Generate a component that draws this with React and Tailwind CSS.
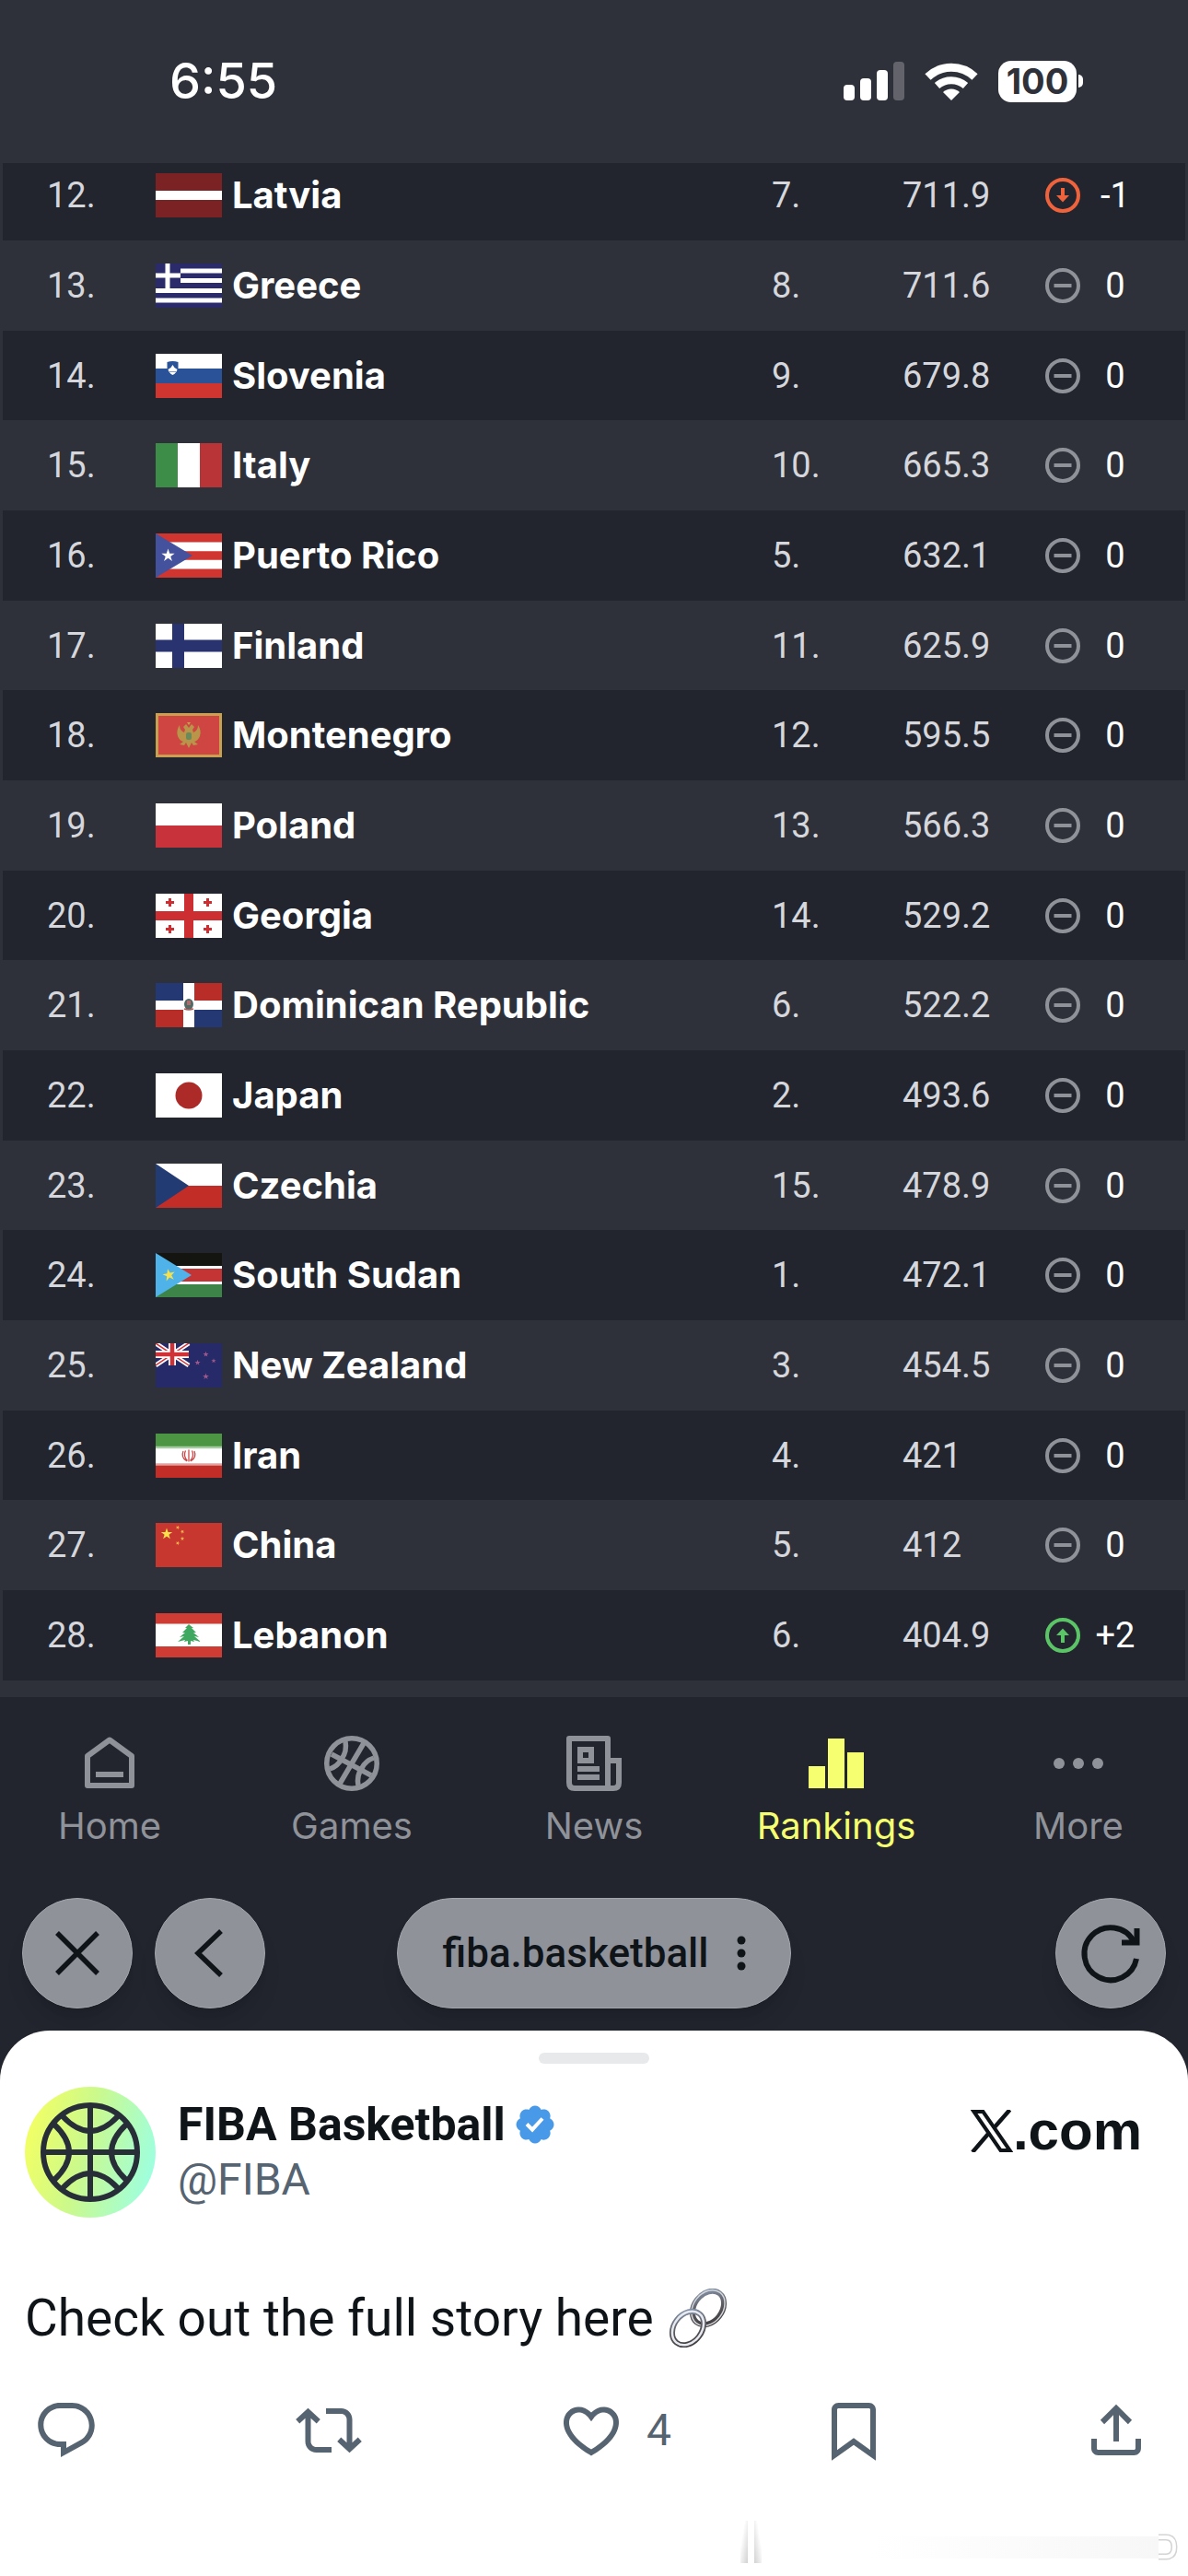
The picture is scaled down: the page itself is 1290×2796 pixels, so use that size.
import React, { useState } from "react";

const STAR = "0,-10 2.3,-3.1 9.5,-3.1 3.7,1.2 5.9,8.1 0,3.8 -5.9,8.1 -3.7,1.2 -9.5,-3.1 -2.3,-3.1";

const Star = ({ x, y, r, fill, rotate = 0 }) => (
  <polygon points={STAR} fill={fill} transform={`translate(${x} ${y}) rotate(${rotate}) scale(${r / 10})`} />
);

// All flags are drawn on a 72 x 48 canvas
const flags = {
  latvia: (
    <>
      <rect width="72" height="48" fill="#7b2225" />
      <rect y="19" width="72" height="10" fill="#fff" />
    </>
  ),
  greece: (
    <>
      <rect width="72" height="48" fill="#2b2a6b" />
      <path d="M27 8h45M27 18.500h45M0 29.500h72M0 40h72" stroke="#fff" strokeWidth="5" />
      <path d="M13 0v28M0 13h27" stroke="#fff" strokeWidth="5" />
    </>
  ),
  slovenia: (
    <>
      <rect width="72" height="48" fill="#fff" />
      <rect y="16" width="72" height="16" fill="#2a5298" />
      <rect y="32" width="72" height="16" fill="#d03530" />
      <path d="M12.500 9q6-2 12 0v6q0 6-6 8q-6-2-6-8z" fill="#2a5298" />
      <path d="M13.500 17l3-2 2-3 2 3 3 2q-1 4-5 6q-4-2-5-6z" fill="#fff" />
      <path d="M14 19.500h9" stroke="#7f97c4" strokeWidth="1" />
    </>
  ),
  italy: (
    <>
      <rect width="72" height="48" fill="#fff" />
      <rect width="24" height="48" fill="#3d8d48" />
      <rect x="48" width="24" height="48" fill="#b93437" />
    </>
  ),
  puertoRico: (
    <>
      <rect width="72" height="48" fill="#d03530" />
      <path d="M0 14.400h72M0 33.600h72" stroke="#fff" strokeWidth="9.600" />
      <path d="M0 0L40 24L0 48z" fill="#44519d" />
      <Star x={13.5} y={24} r={7.5} fill="#fff" />
    </>
  ),
  finland: (
    <>
      <rect width="72" height="48" fill="#fff" />
      <path d="M24.500 0v48M0 24h72" stroke="#28336f" strokeWidth="13" />
    </>
  ),
  montenegro: (
    <>
      <rect width="72" height="48" fill="#c9a052" />
      <rect x="3" y="3" width="66" height="42" fill="#cf4541" />
      <path
        d="M36 16l-3-4-3 3 2 3-1 3q-5-2-5-8q-4 6-2 12q2 5 6 6l-4 3 5 1 2-3 3 6 3-6 2 3 5-1-4-3q4-1 6-6q2-6-2-12q0 6-5 8l-1-3 2-3-3-3z"
        fill="#b9954a"
      />
      <path d="M34 10h4l-2 3z" fill="#c9a052" />
      <rect x="33" y="21" width="6" height="8" rx="2" fill="#6b8a5c" />
    </>
  ),
  poland: (
    <>
      <rect width="72" height="48" fill="#fff" />
      <rect y="24" width="72" height="24" fill="#c8333b" />
    </>
  ),
  georgia: (
    <>
      <rect width="72" height="48" fill="#fff" />
      <path d="M36 0v48M0 24h72" stroke="#cd2e31" strokeWidth="10" />
      <path
        d="M15.500 5v9M11 9.500h9M56.500 5v9M52 9.500h9M15.500 34v9M11 38.500h9M56.500 34v9M52 38.500h9"
        stroke="#cd2e31"
        strokeWidth="3"
      />
    </>
  ),
  dominicanRepublic: (
    <>
      <rect width="72" height="48" fill="#fff" />
      <path d="M0 0h30v19H0zM42 29h30v19H42z" fill="#243974" />
      <path d="M42 0h30v19H42zM0 29h30v19H0z" fill="#b92d29" />
      <ellipse cx="36" cy="23" rx="5" ry="6" fill="#4f6b66" />
      <rect x="34" y="19" width="4" height="5" fill="#b56a6a" />
      <path d="M31 28q5 2 10 0" stroke="#b95555" strokeWidth="1.500" fill="none" />
    </>
  ),
  japan: (
    <>
      <rect width="72" height="48" fill="#fff" />
      <circle cx="36" cy="24" r="14.500" fill="#ac2a28" />
    </>
  ),
  czechia: (
    <>
      <rect width="72" height="24" fill="#fff" />
      <rect y="24" width="72" height="24" fill="#c22d27" />
      <path d="M0 0L36 24L0 48z" fill="#233b73" />
    </>
  ),
  southSudan: (
    <>
      <rect width="72" height="48" fill="#fff" />
      <rect width="72" height="14" fill="#141410" />
      <rect y="17" width="72" height="14" fill="#c43434" />
      <rect y="34" width="72" height="14" fill="#3d8449" />
      <path d="M0 0L39 24L0 48z" fill="#4fb3ea" />
      <Star x={14.5} y={24} r={7} fill="#f6e04b" rotate={-12} />
    </>
  ),
  newZealand: (
    <>
      <rect width="72" height="48" fill="#262a69" />
      <path d="M0 0L36 24M36 0L0 24" stroke="#fff" strokeWidth="5" />
      <path d="M0 0L36 24M36 0L0 24" stroke="#cf3136" strokeWidth="1.500" />
      <path d="M18 0v24M0 12h36" stroke="#fff" strokeWidth="8" />
      <path d="M18 0v24M0 12h36" stroke="#cf3136" strokeWidth="4.500" />
      <Star x={54.5} y={12} r={3.2} fill="#a0588c" />
      <Star x={63} y={19} r={2.8} fill="#a0588c" />
      <Star x={45.5} y={21} r={3.2} fill="#a0588c" />
      <Star x={54.5} y={36} r={3.6} fill="#a0588c" />
    </>
  ),
  iran: (
    <>
      <rect width="72" height="48" fill="#fff" />
      <rect width="72" height="14" fill="#4b9543" />
      <rect y="34" width="72" height="14" fill="#c22d27" />
      <path d="M0 15h72" stroke="#a5caa1" strokeWidth="2.500" />
      <path d="M0 33.500h72" stroke="#e2a3a0" strokeWidth="2.500" />
      <path
        d="M36 17.500v13M32.500 18.500q-3 6 2 11M39.500 18.500q3 6-2 11M30 19q-3 7 4 11M42 19q3 7-4 11"
        stroke="#c9494a"
        strokeWidth="1.300"
        fill="none"
      />
    </>
  ),
  china: (
    <>
      <rect width="72" height="48" fill="#c7372f" />
      <Star x={12} y={12} r={6.5} fill="#fbe24c" />
      <Star x={24} y={5} r={2.4} fill="#f3b74a" rotate={20} />
      <Star x={29} y={9.5} r={2.4} fill="#f3b74a" rotate={40} />
      <Star x={29} y={17} r={2.4} fill="#f3b74a" />
      <Star x={24} y={22} r={2.4} fill="#f3b74a" rotate={20} />
    </>
  ),
  lebanon: (
    <>
      <rect width="72" height="48" fill="#fff" />
      <rect width="72" height="11.500" fill="#cf3c33" />
      <rect y="36" width="72" height="12" fill="#cf3c33" />
      <path
        d="M36 12l-4 4 2 0-5 5 3 0-6 5 5-1-7 6 8-2-1 2 4-1v4h3v-4l4 1-1-2 8 2-7-6 5 1-6-5 3 0-5-5 2 0z"
        fill="#3fa860"
      />
    </>
  ),
};

const teams = [
  { rank: 12, flag: "latvia", name: "Latvia", zone: 7, points: "711.9", change: -1 },
  { rank: 13, flag: "greece", name: "Greece", zone: 8, points: "711.6", change: 0 },
  { rank: 14, flag: "slovenia", name: "Slovenia", zone: 9, points: "679.8", change: 0 },
  { rank: 15, flag: "italy", name: "Italy", zone: 10, points: "665.3", change: 0 },
  { rank: 16, flag: "puertoRico", name: "Puerto Rico", zone: 5, points: "632.1", change: 0 },
  { rank: 17, flag: "finland", name: "Finland", zone: 11, points: "625.9", change: 0 },
  { rank: 18, flag: "montenegro", name: "Montenegro", zone: 12, points: "595.5", change: 0 },
  { rank: 19, flag: "poland", name: "Poland", zone: 13, points: "566.3", change: 0 },
  { rank: 20, flag: "georgia", name: "Georgia", zone: 14, points: "529.2", change: 0 },
  { rank: 21, flag: "dominicanRepublic", name: "Dominican Republic", zone: 6, points: "522.2", change: 0 },
  { rank: 22, flag: "japan", name: "Japan", zone: 2, points: "493.6", change: 0 },
  { rank: 23, flag: "czechia", name: "Czechia", zone: 15, points: "478.9", change: 0 },
  { rank: 24, flag: "southSudan", name: "South Sudan", zone: 1, points: "472.1", change: 0 },
  { rank: 25, flag: "newZealand", name: "New Zealand", zone: 3, points: "454.5", change: 0 },
  { rank: 26, flag: "iran", name: "Iran", zone: 4, points: "421", change: 0 },
  { rank: 27, flag: "china", name: "China", zone: 5, points: "412", change: 0 },
  { rank: 28, flag: "lebanon", name: "Lebanon", zone: 6, points: "404.9", change: 2 },
];

const StatusBar = () => (
  <header className="flex items-center justify-between pt-[55px] pb-[56px] pl-[184px] pr-[114px] text-white">
    <span className="font-[Inter,sans-serif] text-[54px] leading-[66px] font-medium">6:55</span>
    <div className="flex items-center gap-[22px]">
      <svg width="66" height="42" viewBox="0 0 66 42" fill="#fff">
        <rect y="25" width="12" height="17" rx="4" />
        <rect x="18" y="18" width="12" height="24" rx="4" />
        <rect x="36" y="9" width="12" height="33" rx="4" />
        <rect x="54" y="0" width="12" height="42" rx="4" opacity="0.25" />
      </svg>
      <svg width="58" height="42" viewBox="0 0 58 42" fill="none" stroke="#fff">
        <path d="M3.500 16.500A37 37 0 0 1 54.500 16.500" strokeWidth="9" />
        <path d="M13.500 26A23.500 23.500 0 0 1 44.500 26" strokeWidth="8" />
        <path d="M29 42l-9-9a13 13 0 0 1 18 0z" fill="#fff" stroke="none" />
      </svg>
      <div className="flex items-center gap-0.5">
        <span className="flex h-[45px] w-[85px] items-center justify-center rounded-[14px] bg-white font-[Inter,sans-serif] text-[38px] leading-none font-bold text-[#2f313a]">
          100
        </span>
        <span className="h-[14px] w-[5px] rounded-r-full bg-white" />
      </div>
    </div>
  </header>
);

const ChangeIcon = ({ change }) => {
  const color = change > 0 ? "#5bc466" : change < 0 ? "#ee623c" : "#8f9299";
  return (
    <svg width="38" height="38" viewBox="0 0 38 38" fill="none" stroke={color} className="shrink-0">
      <circle cx="19" cy="19" r="17" strokeWidth="4" />
      {change === 0 && <path d="M9.500 19h19" strokeWidth="4" />}
      {change < 0 && (
        <>
          <path d="M19 11v10" strokeWidth="4" />
          <path d="M12 19h14l-7 7.500z" fill={color} stroke="none" />
        </>
      )}
      {change > 0 && (
        <>
          <path d="M19 27V17" strokeWidth="4" />
          <path d="M12 19h14l-7-7.500z" fill={color} stroke="none" />
        </>
      )}
    </svg>
  );
};

const RankingTable = () => (
  <main className="overflow-hidden px-[3px] pb-[18px]">
    {/* first row is partly scrolled under the status bar */}
    <table className="-mt-[14px] w-full table-fixed border-collapse text-left font-[Roboto,sans-serif] text-[38px] leading-[48px] text-[#d5d7dc]">
      <colgroup>
        <col className="w-[166px]" />
        <col />
        <col className="w-[142px]" />
        <col className="w-[155px]" />
        <col className="w-[152px]" />
      </colgroup>
      <tbody>
        {teams.map((team) => (
          <tr key={team.rank} className="h-[98px] odd:bg-[#22252e] nth-[3n]:h-[97px]">
            <td className="p-0 pl-12">{team.rank}.</td>
            <th scope="row" className="p-0 font-normal">
              <div className="flex items-center gap-[11px]">
                <svg width="72" height="48" viewBox="0 0 72 48" className="shrink-0">
                  {flags[team.flag]}
                </svg>
                <span className="font-[Inter,sans-serif] text-[40px] font-bold text-white">{team.name}</span>
              </div>
            </th>
            <td className="p-0">{team.zone}.</td>
            <td className="p-0">{team.points}</td>
            <td className="p-0">
              <div className="flex items-center gap-2.5">
                <ChangeIcon change={team.change} />
                <span className="w-14 text-center text-white">
                  {team.change > 0 ? `+${team.change}` : team.change}
                </span>
              </div>
            </td>
          </tr>
        ))}
      </tbody>
    </table>
  </main>
);

const navItems = [
  {
    text: "Home",
    icon: (
      <>
        <path d="M12 60V28L36 10.500L60 28V60z" strokeWidth="6" strokeLinejoin="round" />
        <path d="M21 48h30" strokeWidth="6" />
      </>
    ),
  },
  {
    text: "Games",
    icon: (
      <g strokeWidth="5.500">
        <circle cx="36" cy="36" r="27.250" />
        <path d="M14 26L57 49M49 14L23 58" />
        <path d="M29 12Q31 23 25 31Q21 39 12 42M43 60Q41 49 47 41Q51 33 60 30" />
      </g>
    ),
  },
  {
    text: "News",
    icon: (
      <>
        <path d="M9 9H51V63H15Q9 63 9 57z" strokeWidth="6" strokeLinejoin="round" />
        <path d="M51 33H63V57Q63 63 57 63H51" strokeWidth="6" />
        <path d="M21 21h12v12H21zM18 42h24M18 51h24" strokeWidth="6" />
      </>
    ),
  },
  {
    text: "Rankings",
    icon: <path d="M6 39h18v24H6zM27 9h18v54H27zM48 24h18v39H48z" fill="currentColor" stroke="none" />,
  },
  {
    text: "More",
    icon: (
      <g fill="currentColor" stroke="none">
        <circle cx="15" cy="36" r="6" />
        <circle cx="36" cy="36" r="6" />
        <circle cx="57" cy="36" r="6" />
      </g>
    ),
  },
];

const BottomNav = () => (
  <nav className="flex justify-between px-[29px] pt-9">
    {navItems.map((item) => (
      <a
        key={item.text}
        href="#"
        className={`flex w-[180px] flex-col items-center gap-2 ${
          item.text === "Rankings" ? "text-[#f6ff70]" : "text-[#8f9299]"
        }`}
      >
        <svg width="72" height="72" viewBox="0 0 72 72" fill="none" stroke="currentColor">
          {item.icon}
        </svg>
        <span className="font-[Inter,sans-serif] text-[40px] leading-[48px]">{item.text}</span>
      </a>
    ))}
  </nav>
);

const RoundButton = ({ label, children }) => (
  <button
    type="button"
    aria-label={label}
    className="flex size-[120px] items-center justify-center rounded-full border border-[#a2a5ab] bg-[#8f9299] text-[#0f1419] shadow-xl"
  >
    {children}
  </button>
);

const BrowserBar = () => (
  <div className="grid grid-cols-[1fr_auto_1fr] items-center px-6 pt-[54px] pb-6">
    <div className="flex gap-6">
      <RoundButton label="Close">
        <svg width="72" height="72" viewBox="0 0 72 72" fill="none" stroke="currentColor" strokeWidth="5.500">
          <path d="M14 14L58 58M58 14L14 58" />
        </svg>
      </RoundButton>
      <RoundButton label="Back">
        <svg width="72" height="72" viewBox="0 0 72 72" fill="none" stroke="currentColor" strokeWidth="5.500">
          <path d="M48 12L23 36L48 60" />
        </svg>
      </RoundButton>
    </div>
    <button
      type="button"
      className="flex h-[120px] items-center gap-[30px] rounded-full border border-[#a2a5ab] bg-[#8f9299] px-12 font-[Roboto,sans-serif] text-[44px] font-medium text-[#0f1419] shadow-xl"
    >
      fiba.basketball
      <svg width="10" height="38" viewBox="0 0 10 38" fill="currentColor">
        <circle cx="5" cy="5" r="4.500" />
        <circle cx="5" cy="19" r="4.500" />
        <circle cx="5" cy="33" r="4.500" />
      </svg>
    </button>
    <div className="flex justify-end">
      <RoundButton label="Reload">
        <svg width="72" height="72" viewBox="0 0 72 72" fill="none" stroke="currentColor" strokeWidth="6">
          <path d="M64 42A28.500 28.500 0 1 1 61 23" />
          <path d="M64.500 9V24.500H48" />
        </svg>
      </RoundButton>
    </div>
  </div>
);

const Avatar = () => (
  <svg width="142" height="142" viewBox="0 0 142 142" className="shrink-0">
    <defs>
      <linearGradient id="avatar" x1="0" y1="0.35" x2="1" y2="0.6">
        <stop offset="0" stopColor="#f3ff63" />
        <stop offset="0.45" stopColor="#cbf98c" />
        <stop offset="1" stopColor="#9dffe0" />
      </linearGradient>
    </defs>
    <circle cx="71" cy="71" r="71" fill="url(#avatar)" />
    <g fill="none" stroke="#272e38" strokeWidth="6">
      <circle cx="71" cy="71" r="51" />
      <path d="M71 20v102M20 71h102" />
      <path d="M32 41Q64 71 32 101M110 41Q78 71 110 101M41 32Q71 64 101 32M41 110Q71 78 101 110" />
    </g>
  </svg>
);

const VerifiedBadge = () => (
  <svg width="48" height="48" viewBox="0 0 22 22" fill="#4999e9">
    <path d="M20.396 11c-.018-.646-.215-1.275-.57-1.816-.354-.54-.852-.972-1.438-1.246.223-.607.27-1.264.14-1.897-.131-.634-.437-1.218-.882-1.687-.47-.445-1.053-.75-1.687-.882-.633-.13-1.29-.083-1.897.14-.273-.587-.704-1.086-1.245-1.44S11.647 1.62 11 1.604c-.646.017-1.273.213-1.813.568s-.969.854-1.24 1.44c-.608-.223-1.267-.272-1.902-.14-.635.13-1.22.436-1.69.882-.445.47-.749 1.055-.878 1.688-.13.633-.08 1.29.144 1.896-.587.274-1.087.705-1.443 1.245-.356.54-.555 1.17-.574 1.817.02.647.218 1.276.574 1.817.356.54.856.972 1.443 1.245-.224.606-.274 1.263-.144 1.896.13.634.433 1.218.877 1.688.47.443 1.054.747 1.687.878.633.132 1.29.084 1.897-.136.274.586.705 1.084 1.246 1.439.54.354 1.17.551 1.816.569.647-.016 1.276-.213 1.817-.567s.972-.854 1.245-1.44c.604.239 1.266.296 1.903.164.636-.132 1.22-.447 1.68-.907.46-.46.776-1.044.908-1.681s.075-1.299-.165-1.903c.586-.274 1.084-.705 1.439-1.246.354-.54.551-1.17.569-1.816zM9.662 14.850l-3.429-3.428 1.293-1.302 2.072 2.072 4.400-4.794 1.347 1.246z" />
  </svg>
);

const LinkEmoji = () => (
  <svg width="64" height="64" viewBox="0 0 64 64" fill="none">
    <defs>
      <linearGradient id="chain" x1="0" y1="0" x2="1" y2="1">
        <stop offset="0" stopColor="#8a9bb5" />
        <stop offset="0.5" stopColor="#5c5a5f" />
        <stop offset="1" stopColor="#3a3536" />
      </linearGradient>
    </defs>
    <g transform="rotate(38 43 21)">
      <ellipse cx="43" cy="21" rx="15" ry="20" stroke="url(#chain)" strokeWidth="6" />
      <ellipse cx="43" cy="21" rx="16" ry="21" stroke="#d3d6da" strokeWidth="1.500" />
    </g>
    <g transform="rotate(38 21 43)">
      <ellipse cx="21" cy="43" rx="15" ry="20" stroke="url(#chain)" strokeWidth="6" />
      <ellipse cx="21" cy="43" rx="15" ry="20" stroke="#e6eaf0" strokeWidth="2.500" />
    </g>
  </svg>
);

const actions = {
  reply:
    "M1.751 10c0-4.420 3.584-8 8.005-8h4.366c4.490 0 8.129 3.640 8.129 8.130 0 2.960-1.607 5.680-4.196 7.110l-8.054 4.460v-3.690h-.067c-4.490.1-8.183-3.510-8.183-8.010zm8.005-6c-3.317 0-6.005 2.690-6.005 6 0 3.370 2.770 6.080 6.138 6.010l.351-.01h1.761v2.300l5.087-2.810c1.951-1.080 3.163-3.130 3.163-5.360 0-3.390-2.744-6.130-6.129-6.130H9.756z",
  repost:
    "M4.500 3.880l4.432 4.140-1.364 1.460L5.500 7.550V16c0 1.100.896 2 2 2H13v2H7.500c-2.209 0-4-1.790-4-4V7.550L1.432 9.480.068 8.020 4.500 3.880zM16.500 6H11V4h5.500c2.209 0 4 1.790 4 4v8.450l2.068-1.930 1.364 1.460-4.432 4.140-4.432-4.140 1.364-1.460 2.068 1.930V8c0-1.100-.896-2-2-2z",
  like: "M16.697 5.500c-1.222-.06-2.679.51-3.890 2.160l-.805 1.090-.806-1.090C9.984 6.010 8.526 5.440 7.304 5.500c-1.243.07-2.349.78-2.910 1.910-.552 1.120-.633 2.780.479 4.820 1.074 1.970 3.257 4.270 7.129 6.610 3.870-2.340 6.052-4.640 7.126-6.610 1.111-2.040 1.030-3.700.477-4.820-.561-1.130-1.666-1.840-2.908-1.910zm4.187 7.690c-1.351 2.480-4.001 5.120-8.379 7.670l-.503.3-.504-.3c-4.379-2.550-7.029-5.190-8.382-7.670-1.360-2.500-1.410-4.860-.514-6.670.887-1.790 2.647-2.910 4.601-3.010 1.651-.09 3.368.56 4.798 2.010 1.429-1.450 3.146-2.100 4.796-2.010 1.954.1 3.714 1.220 4.601 3.010.896 1.810.846 4.170-.514 6.670z",
  bookmark:
    "M4 4.500C4 3.120 5.119 2 6.500 2h11C18.881 2 20 3.120 20 4.500v18.440l-8-5.710-8 5.710V4.500zM6.500 4c-.276 0-.5.22-.5.5v14.560l6-4.290 6 4.290V4.500c0-.28-.224-.5-.5-.5h-11z",
  share:
    "M12 2.590l5.700 5.700-1.410 1.420L13 6.410V16h-2V6.410l-3.300 3.300-1.410-1.420L12 2.590zM21 15l-.02 3.510c0 1.380-1.120 2.490-2.500 2.490H5.500C4.110 21 3 19.880 3 18.500V15h2v3.500c0 .28.22.5.5.5h12.980c.28 0 .5-.22.5-.5L19 15h2z",
};

const ActionButton = ({ label, path, count, onClick }) => (
  <button type="button" aria-label={label} onClick={onClick} className="flex w-[72px] items-center gap-6">
    <svg width="72" height="72" viewBox="0 0 24 24" fill="currentColor" className="shrink-0">
      <path d={path} />
    </svg>
    {count > 0 && <span className="font-[Roboto,sans-serif] text-[48px] leading-[60px]">{count}</span>}
  </button>
);

const PostSheet = () => {
  const [likes, setLikes] = useState(4);

  return (
    <section className="grow rounded-t-[54px] bg-white pt-6 font-[Roboto,sans-serif] text-[#0f1419]">
      <div className="mx-auto h-3 w-[120px] rounded-full bg-[#e7e9ea]" />

      {/* Author */}
      <div className="flex items-start justify-between pt-[25px] pr-[50px] pl-[27px]">
        <div className="flex items-center gap-6">
          <Avatar />
          <div>
            <div className="flex items-center gap-2">
              <h1 className="text-[50px] leading-[60px] font-bold">FIBA Basketball</h1>
              <VerifiedBadge />
            </div>
            <p className="text-[48px] leading-[60px] text-[#566370]">@FIBA</p>
          </div>
        </div>
        <a href="#" aria-label="X.com" className="flex items-center pt-3">
          <svg width="46" height="46" viewBox="0 0 46 46" fill="none" stroke="currentColor">
            <path d="M3.500 2h10L42.500 44h-10z" strokeWidth="4" />
            <path d="M42.500 0L25 20M2 46L20 25" strokeWidth="4.500" />
          </svg>
          <span className="font-['Liberation_Sans',sans-serif] text-[60px] leading-[72px] font-bold">.com</span>
        </a>
      </div>

      {/* Post */}
      <p className="flex items-center gap-4 pt-[77px] pl-[27px] text-[55px] leading-[64px]">
        Check out the full story here
        <LinkEmoji />
      </p>

      <div className="flex items-center justify-between pt-[54px] pr-[42px] pl-9 text-[#566370]">
        <ActionButton label="Reply" path={actions.reply} />
        <ActionButton label="Repost" path={actions.repost} />
        <ActionButton label="Like" path={actions.like} count={likes} onClick={() => setLikes(likes + 1)} />
        <ActionButton label="Bookmark" path={actions.bookmark} />
        <ActionButton label="Share" path={actions.share} />
      </div>

      <div className="flex items-end pt-[62px] pr-2 pb-[13px] pl-[804px]">
        <span className="flex h-[46px] gap-[7px]">
          <span className="w-2 bg-linear-to-tl from-[#d2d2d2] to-white to-70%" />
          <span className="w-2 bg-linear-to-tr from-[#d2d2d2] to-white to-70%" />
        </span>
        <span className="mb-[5px] ml-[120px] h-6 grow border-y-2 border-transparent bg-linear-to-r from-white to-[#f7f7f7]" />
        <svg width="24" height="46" viewBox="0 0 24 46" fill="none">
          <path d="M0 18h8q9 0 9 10.500T8 39H0" stroke="#d4d4d4" strokeWidth="7" />
          <path d="M0 18h8q9 0 9 10.500T8 39H0" stroke="#fff" strokeWidth="4" />
        </svg>
      </div>
    </section>
  );
};

const App = () => {
  return (
    <div className="flex min-h-screen flex-col bg-[#2f313a]">
      <StatusBar />
      <RankingTable />
      <div className="flex grow flex-col bg-[#22252e]">
        <BottomNav />
        <BrowserBar />
        <PostSheet />
      </div>
    </div>
  );
};

export default App;
